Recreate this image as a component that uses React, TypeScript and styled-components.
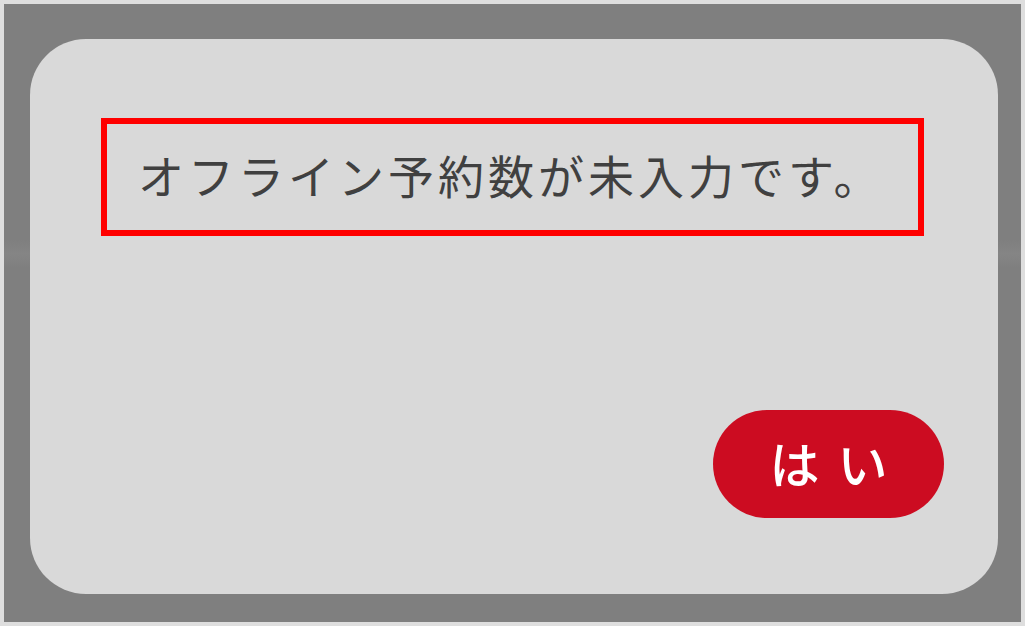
import styled, { createGlobalStyle } from "styled-components";

const GlobalStyle = createGlobalStyle`
  html, body {
    margin: 0;
    padding: 0;
    background: #dedede;
  }
  body {
    font-family: "Noto Sans CJK JP", "Noto Sans", sans-serif;
  }
`;

const Frame = styled.div`
  width: 1025px;
  height: 626px;
  box-sizing: border-box;
  padding: 4px;
  background: #dedede;
`;

const Overlay = styled.div`
  width: 100%;
  height: 100%;
  box-sizing: border-box;
  padding: 35px 23px 28px 26px;
  background: linear-gradient(
    to bottom,
    #7f7f7f 0,
    #7f7f7f 236px,
    #858585 250px,
    #7f7f7f 264px,
    #7f7f7f 100%
  );
  display: flex;
`;

const Dialog = styled.div`
  flex: 1;
  display: flex;
  flex-direction: column;
  box-sizing: border-box;
  padding: 79px 54px 76px 71px;
  background: #d9d9d9;
  border-radius: 56px;
`;

const Message = styled.div`
  height: 118px;
  margin-right: 20px;
  box-sizing: border-box;
  border: 6px solid #ff0000;
  padding: 0 0 6px 31px;
  display: flex;
  align-items: center;
  color: #404040;
  font-size: 46px;
  letter-spacing: 4px;
  font-weight: 400;
  white-space: nowrap;
`;

const Actions = styled.div`
  margin-top: auto;
  display: flex;
  justify-content: flex-end;
`;

const YesButton = styled.button`
  width: 231px;
  height: 108px;
  border: none;
  border-radius: 54px;
  background: #cc0c21;
  color: #ffffff;
  font-family: "Noto Sans CJK JP", "Noto Sans", sans-serif;
  font-size: 50px;
  font-weight: 500;
  letter-spacing: 18px;
  padding: 0 0 4px 18px;
  cursor: pointer;
`;

const App = () => {
  return (
    <>
      <GlobalStyle />
      <Frame>
        <Overlay>
          <Dialog>
            <Message>オフライン予約数が未入力です。</Message>
            <Actions>
              <YesButton>はい</YesButton>
            </Actions>
          </Dialog>
        </Overlay>
      </Frame>
    </>
  );
};

export default App;
